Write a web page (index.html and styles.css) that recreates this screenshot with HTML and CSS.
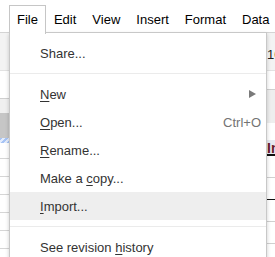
FILE: index.html
```html
<!DOCTYPE html>
<html lang="en">
  <head>
    <meta charset="UTF-8" />
    <title>File menu</title>
    <link rel="stylesheet" href="styles.css">
  </head>
  <body>
    <div class="menubar">
      <div class="menu-button open">File</div>
      <div class="menu-button">Edit</div>
      <div class="menu-button">View</div>
      <div class="menu-button">Insert</div>
      <div class="menu-button">Format</div>
      <div class="menu-button">Data</div>
    </div>

    <div class="sheet">
      <div class="strip left-strip">
        <div class="toolbar-band"></div>
        <div class="formula-band"></div>
        <div class="header-band"></div>
        <div class="selected-band"></div>
        <div class="hatch-band"></div>
        <div class="row first"></div>
        <div class="row"></div>
        <div class="row"></div>
        <div class="row"></div>
        <div class="row"></div>
        <div class="row"></div>
      </div>
      <div class="sheet-body"></div>
      <div class="strip right-strip">
        <div class="toolbar-band"><span class="font-size">10</span></div>
        <div class="formula-band short"></div>
        <div class="grey-band"></div>
        <div class="blank-band"></div>
        <div class="cell-head">In</div>
        <div class="cell-row"></div>
        <div class="cell-row dark"></div>
        <div class="cell-row"></div>
        <div class="cell-row"></div>
      </div>
    </div>

    <div class="dropdown">
      <div class="menu-item">Share...</div>
      <div class="separator"></div>
      <div class="menu-item"><span><u>N</u>ew</span><span class="submenu-arrow"></span></div>
      <div class="menu-item"><span><u>O</u>pen...</span><span class="shortcut">Ctrl+O</span></div>
      <div class="menu-item"><span><u>R</u>ename...</span></div>
      <div class="menu-item"><span>Make a <u>c</u>opy...</span></div>
      <div class="menu-item highlight"><span><u>I</u>mport...</span></div>
      <div class="separator"></div>
      <div class="menu-item"><span>See revision <u>h</u>istory</span></div>
    </div>
  </body>
</html>
```

FILE: styles.css
```css
body {
  margin: 0;
  font-family: "Liberation Sans", Arial, sans-serif;
  font-size: 13px;
  background: white;
  width: 275px;
  height: 257px;
  overflow: hidden;
  position: relative;
}
.menubar {
  display: flex;
  height: 27px;
  padding: 5px 0 0 9px;
  border-bottom: 1px solid #d4d4d4;
}
.menu-button {
  padding: 0 7px;
  border: 1px solid transparent;
  border-bottom: none;
  line-height: 27px;
  color: #000;
  white-space: nowrap;
}
.menu-button.open {
  position: relative;
  z-index: 3;
  height: 28px;
  border-color: #c6c6c6;
  background: white;
}
.sheet {
  display: flex;
  height: 224px;
}
.strip {
  width: 9px;
  display: flex;
  flex-direction: column;
  overflow: hidden;
}
.sheet-body {
  flex-grow: 1;
  background: white;
}
.toolbar-band {
  height: 37px;
  background: #f3f3f3;
  border-bottom: 1px solid #e2e2e2;
  position: relative;
}
.formula-band {
  height: 27px;
  background: white;
  border-bottom: 1px solid #cfcfcf;
}
.formula-band.short {
  height: 18px;
}
.header-band {
  height: 14px;
  background: #f0f0f0;
}
.selected-band {
  height: 25px;
  background: #c6c6c6;
}
.hatch-band {
  height: 5px;
  background: repeating-linear-gradient(135deg, #a7c4f5 0 2px, #e3ecfc 2px 4px);
}
.row {
  height: 17px;
  border-bottom: 1px solid #d6d6d6;
}
.row.first {
  height: 15px;
}
.font-size {
  position: absolute;
  left: 1px;
  top: 14px;
  font-size: 13px;
  color: #222;
}
.grey-band {
  height: 33px;
  background: #eeeeee;
}
.blank-band {
  height: 17px;
}
.cell-head {
  height: 14px;
  background: #e6e9f0;
  border-bottom: 2px solid #111;
  color: #6a1b2a;
  font-weight: bold;
  font-size: 14px;
  line-height: 16px;
  padding-left: 1px;
}
.cell-row {
  height: 21px;
  border-bottom: 1px solid #d0d0d0;
}
.cell-row.dark {
  border-bottom-color: #111;
}

.dropdown {
  position: absolute;
  left: 9px;
  top: 32px;
  width: 256px;
  padding: 6px 0;
  background: white;
  border: 1px solid #c8c8c8;
  box-shadow: 0 2px 4px rgba(0, 0, 0, 0.2);
  z-index: 2;
}
.menu-item {
  display: flex;
  align-items: center;
  justify-content: space-between;
  height: 28px;
  padding: 0 5px 0 30px;
  color: #333;
  white-space: nowrap;
}
.menu-item u {
  text-underline-offset: 2px;
}
.menu-item.highlight {
  background: #eeeeee;
}
.shortcut {
  color: #737373;
}
.submenu-arrow {
  width: 0;
  height: 0;
  margin-right: 5px;
  border-left: 7px solid #7a7a7a;
  border-top: 4px solid transparent;
  border-bottom: 4px solid transparent;
}
.separator {
  margin: 6px 0;
  border-top: 1px solid #ebebeb;
}
```
